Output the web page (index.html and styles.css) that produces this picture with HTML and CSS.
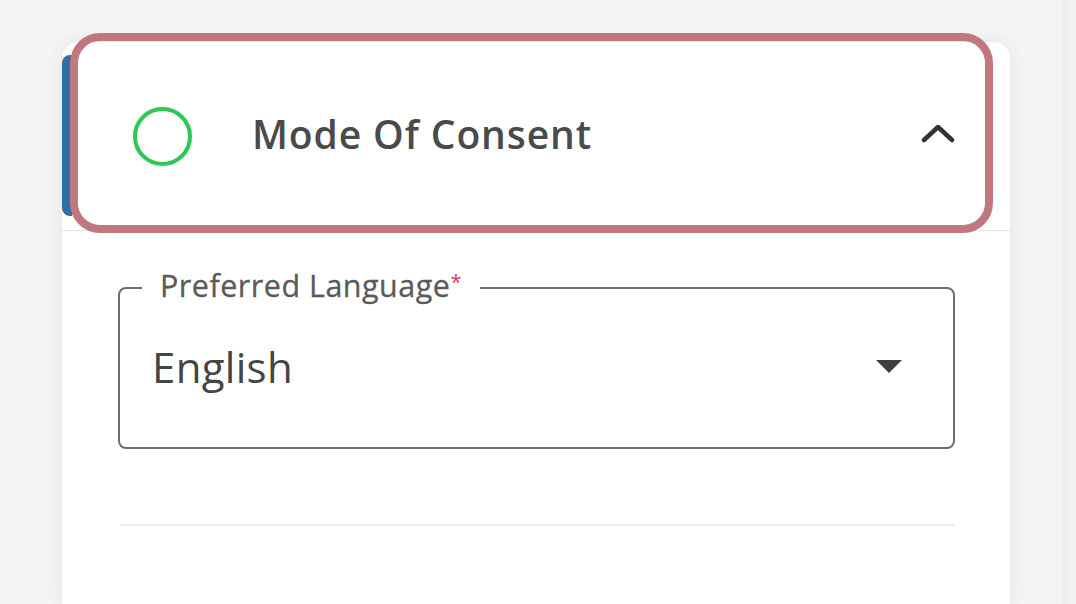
FILE: index.html
```html
<!DOCTYPE html>
<html lang="en">
<head>
<meta charset="utf-8">
<title>Mode Of Consent</title>
<link rel="stylesheet" href="styles.css">
</head>
<body>
  <div class="page">
    <section class="card">
      <header class="acc-header">
        <span class="status-ring"></span>
        <h2 class="acc-title">Mode Of Consent</h2>
        <svg class="chevron" width="34" height="20" viewBox="0 0 34 20" aria-hidden="true">
          <path d="M3 17 L17 4 L31 17" fill="none" stroke="#333" stroke-width="4.5" stroke-linecap="round" stroke-linejoin="round"/>
        </svg>
      </header>
      <div class="acc-body">
        <fieldset class="select-field">
          <legend class="select-label">Preferred Language<span class="req">*</span></legend>
          <div class="select-row">
            <span class="select-value">English</span>
            <svg class="caret" width="26" height="14" viewBox="0 0 26 14" aria-hidden="true">
              <path d="M0 0 H26 L13 13 Z" fill="#3f3f3f"/>
            </svg>
          </div>
        </fieldset>
        <div class="divider"></div>
      </div>
      <div class="highlight"></div>
    </section>
  </div>
</body>
</html>
```

FILE: styles.css
```css
* { box-sizing: border-box; }

html, body {
  margin: 0;
  height: 100%;
}

body {
  background: #f3f3f3;
  font-family: "Open Sans", "Noto Sans", sans-serif;
  overflow: hidden;
}

.page {
  height: 100%;
  padding: 42px 66px 0 62px;
  background: linear-gradient(to right, #f4f4f4 0, #f4f4f4 1060px, #ececec 1064px, #f2f2f2 1070px);
}

.card {
  position: relative;
  width: 948px;
  height: 100%;
  background: #fff;
  border-radius: 16px 16px 0 0;
  box-shadow: 0 0 18px rgba(0, 0, 0, 0.07);
}

.acc-header {
  display: flex;
  align-items: center;
  height: 189px;
  padding: 0 55px 6px 71px;
  border-bottom: 1px solid #e2e2e2;
  position: relative;
}

.acc-header::before {
  content: "";
  position: absolute;
  left: 0;
  top: 13px;
  bottom: 14px;
  width: 10px;
  background: #2f6ea6;
  border-radius: 8px 0 0 8px;
}

.status-ring {
  width: 59px;
  height: 59px;
  flex: none;
  margin-top: 6px;
  border: 4.5px solid #2fc557;
  border-radius: 50%;
  box-shadow: 0 0 2px rgba(47, 197, 87, 0.5);
}

.acc-title {
  margin: 0 0 0 60px;
  flex: 1;
  font-size: 39px;
  font-weight: 600;
  color: #4a4a4a;
  letter-spacing: 0.9px;
}

.chevron {
  flex: none;
  display: block;
}

.acc-body {
  padding: 34px 55px 0 56px;
}

.select-field {
  margin: 0;
  padding: 0 0 28px 0;
  border: 2px solid #6e6e6e;
  border-radius: 8px;
  height: 184px;
}

.select-label {
  margin-left: 22px;
  padding: 0 18px 8px;
  font-size: 30.5px;
  line-height: 34px;
  color: #5a5a5a;
  letter-spacing: 0.5px;
  -webkit-text-stroke: 0.3px #5a5a5a;
}

.req {
  color: #d4356d;
  font-size: 20px;
  vertical-align: 8px;
  -webkit-text-stroke: 0;
}

.select-row {
  display: flex;
  align-items: center;
  height: 113px;
  padding: 0 51px 0 32px;
}

.select-value {
  flex: 1;
  font-size: 42px;
  color: #454545;
  letter-spacing: 0.3px;
}

.caret {
  display: block;
  flex: none;
}

.divider {
  margin: 75px 0 0 2px;
  height: 2px;
  background: #ededed;
}

.highlight {
  position: absolute;
  left: 8px;
  top: -9px;
  width: 923px;
  height: 200px;
  border: 8px solid #c0787f;
  border-radius: 30px;
  pointer-events: none;
}
```
